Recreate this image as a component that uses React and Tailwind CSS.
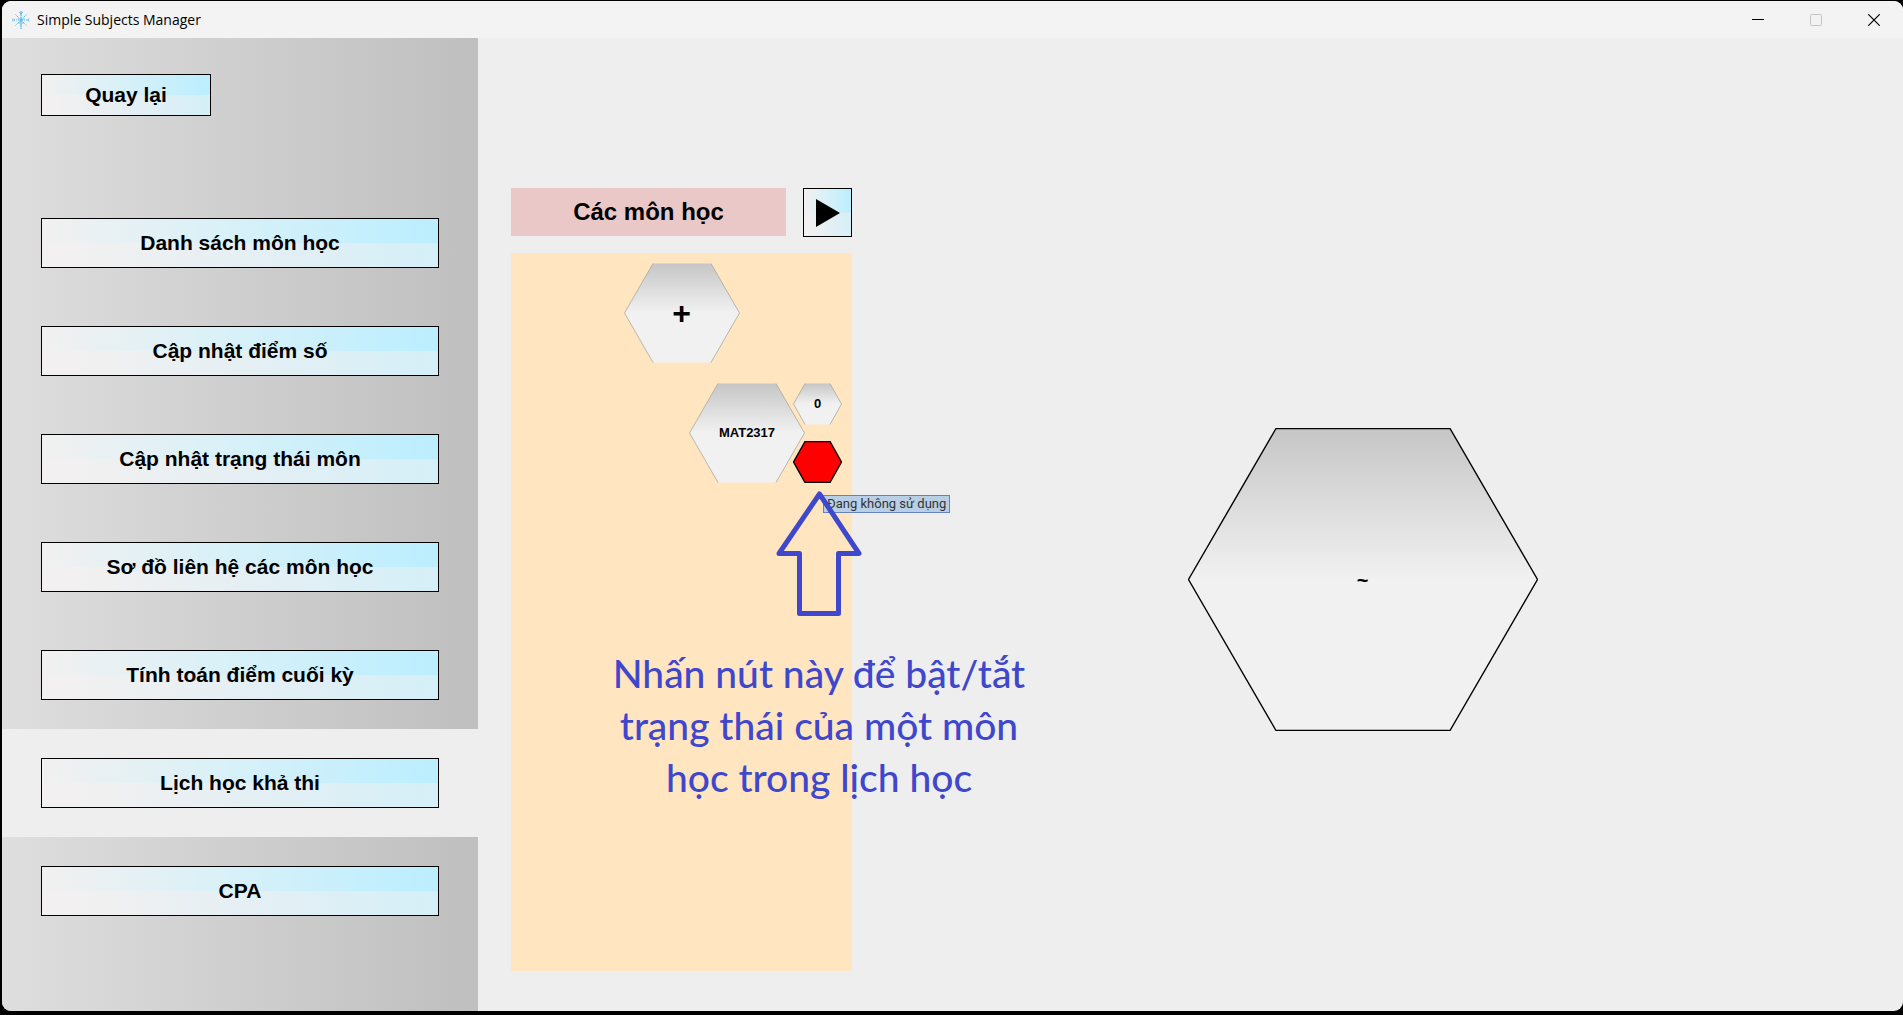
import React, { useId } from "react";

const NAV_ITEMS = [
  "Danh sách môn học",
  "Cập nhật điểm số",
  "Cập nhật trạng thái môn",
  "Sơ đồ liên hệ các môn học",
  "Tính toán điểm cuối kỳ",
  "Lịch học khả thi",
  "CPA",
];
const ACTIVE_ITEM = "Lịch học khả thi";

/* Two-tone glossy button: stronger blue on the upper half, paler below. */
function GlossButton({ className = "", children, ...rest }) {
  return (
    <button
      type="button"
      className={`grid place-items-center border border-black bg-[linear-gradient(to_right,#f2f0f0,#dcf1f7_40%,#bbeeff),linear-gradient(to_right,#f2f0f0_10%,#d5eff8)] bg-[length:100%_50%,100%_100%] bg-no-repeat font-bold text-black ${className}`}
      {...rest}
    >
      {children}
    </button>
  );
}

function Hexagon({ width, height, inset, fill, outline = "sides", label, className = "", children }) {
  const id = useId();
  const mid = height / 2;
  const left = `M${inset} 0.5 L0.5 ${mid} L${inset} ${height - 0.5}`;
  const right = `M${width - inset} 0.5 L${width - 0.5} ${mid} L${width - inset} ${height - 0.5}`;
  const body = `${left} L${width - inset} ${height - 0.5} L${width - 0.5} ${mid} L${width - inset} 0.5 Z`;
  return (
    <button type="button" aria-label={label} className={`grid shrink-0 place-items-center font-bold text-black ${className}`}>
      <svg width={width} height={height} viewBox={`0 0 ${width} ${height}`} className="col-start-1 row-start-1" aria-hidden="true">
        <defs>
          <linearGradient id={id} x1="0" y1="0" x2="0" y2="1">
            <stop offset="0" stopColor="#c6c6c6" />
            <stop offset="0.5" stopColor="#f1f1f1" />
          </linearGradient>
        </defs>
        <path d={body} fill={fill || `url(#${id})`} stroke={outline === "full" ? "#000" : "none"} strokeWidth="1.4" />
        {outline === "sides" && <path d={`${left} ${right}`} fill="none" stroke="#aaa79f" strokeWidth="0.8" />}
      </svg>
      <span className="col-start-1 row-start-1">{children}</span>
    </button>
  );
}

function StarIcon() {
  return (
    <svg width="18" height="18" viewBox="0 0 18 18" fill="none" stroke="#53b4e4" aria-hidden="true">
      <path d="M9 0v18" strokeWidth="1.2" strokeDasharray="5 0.6" />
      <path d="M0 9h18" strokeWidth="1" strokeDasharray="1 1" />
      <path d="M3.5 3.5l11 11M14.5 3.5l-11 11" strokeWidth="1" strokeDasharray="1.4 0.7" />
      <path d="M7 1l2 2 2-2M5.5 7L9 10.5 12.5 7M1 7.5L2.5 9 1 10.5M17 7.5L15.5 9 17 10.5M6.5 13L9 10.5 11.5 13" strokeWidth="0.8" />
    </svg>
  );
}

function TitleBar() {
  return (
    <header className="flex h-[37px] shrink-0 items-stretch bg-[#f3f3f3]">
      <div className="flex items-center gap-[7px] pl-[10px]">
        <StarIcon />
        <h1 className="font-['Open_Sans',sans-serif] text-[14px] leading-5 text-black">Simple Subjects Manager</h1>
      </div>
      <div className="ml-auto flex">
        <button type="button" aria-label="Minimize" className="grid w-[58px] place-items-center">
          <svg width="12" height="12" viewBox="0 0 12 12" stroke="#000"><path d="M0 5.5h12" /></svg>
        </button>
        <button type="button" aria-label="Maximize" disabled className="grid w-[58px] place-items-center">
          <svg width="12" height="12" viewBox="0 0 12 12" fill="none" stroke="#c3c3c3"><rect x="0.5" y="0.5" width="11" height="11" rx="1" /></svg>
        </button>
        <button type="button" aria-label="Close" className="grid w-[58px] place-items-center">
          <svg width="12" height="12" viewBox="0 0 12 12" stroke="#000" strokeWidth="1.2"><path d="M0.3 0.3l11.4 11.4M11.7 0.3L0.3 11.7" /></svg>
        </button>
      </div>
    </header>
  );
}

function Sidebar() {
  return (
    <aside className="w-[476px] shrink-0 bg-linear-to-r from-[#dedede] to-[#bfbfbf] pt-9">
      <div className="h-[115px] px-[39px]">
        <GlossButton className="h-[42px] w-[170px] text-[21px]">Quay lại</GlossButton>
      </div>
      <nav>
        {NAV_ITEMS.map((item) => (
          <div key={item} className={`px-[39px] py-[29px] ${item === ACTIVE_ITEM ? "bg-[#eeeeee]" : ""}`}>
            <GlossButton
              className="h-[50px] w-full text-[21px]"
              aria-current={item === ACTIVE_ITEM ? "page" : undefined}
            >
              {item}
            </GlossButton>
          </div>
        ))}
      </nav>
    </aside>
  );
}

function Annotation() {
  return (
    <div className="pointer-events-none absolute top-[49px] left-[26px] z-20 flex w-[440px] -translate-x-1/2 flex-col items-center text-[#3f48cc]">
      <svg width="86" height="126" viewBox="0 0 86 126" fill="none" stroke="currentColor" strokeWidth="5" strokeLinejoin="round" aria-hidden="true">
        <path d="M43.5 4L83 63.5H62.5V123.500H23.500V63.5H3Z" />
      </svg>
      <p className="mt-[31px] text-center font-['Lato',sans-serif] text-[39px] leading-[52px] font-medium whitespace-nowrap">
        Nhấn nút này để bật/tắt
        <br />
        trạng thái của một môn
        <br />
        học trong lịch học
      </p>
    </div>
  );
}

function SubjectPanel() {
  return (
    <section className="flex w-[341px] shrink-0 flex-col">
      <div className="flex items-start justify-between">
        <h2 className="grid h-12 w-[275px] place-items-center bg-[#ebc8c8] text-[24px] font-bold text-black">Các môn học</h2>
        <GlossButton className="h-[49px] w-[49px]" aria-label="Chạy">
          <svg width="24" height="28" viewBox="0 0 24 28" aria-hidden="true"><path d="M0 0L24 14L0 28Z" /></svg>
        </GlossButton>
      </div>
      <div className="mt-4 flex flex-1 flex-col bg-[#ffe6c1] pt-[10px]">
        <Hexagon width={116} height={100} inset={29} className="self-center text-[32px]">+</Hexagon>
        <div className="mt-5 flex justify-end pr-[10px]">
          <Hexagon width={116} height={100} inset={29} className="self-start text-[13px]">MAT2317</Hexagon>
          <div className="-ml-3 flex flex-col gap-4">
            <Hexagon width={49} height={42} inset={12} className="text-[13px]">0</Hexagon>
            <div className="relative">
              <Hexagon width={49} height={42} inset={12} fill="#ff0000" outline="full" label="Đang không sử dụng" />
              <div role="tooltip" className="absolute top-[54px] left-[30px] z-10 border border-[#6382bf] bg-[#b8cfe5] px-[3px] font-['Roboto',sans-serif] text-[13px] leading-4 whitespace-nowrap text-[#333333]">
                Đang không sử dụng
              </div>
              <Annotation />
            </div>
          </div>
        </div>
      </div>
    </section>
  );
}

export default function App() {
  return (
    <div className="flex min-h-screen flex-col bg-black pt-px pb-1 pl-[2px] font-['Liberation_Sans',Arial,sans-serif]">
      <div className="flex flex-1 flex-col overflow-hidden rounded-[9px] bg-[#eeeeee]">
        <TitleBar />
        <div className="flex flex-1">
          <Sidebar />
          <main className="flex flex-1 pt-[150px] pr-[30px] pb-10 pl-[33px]">
            <SubjectPanel />
            <section className="flex flex-1 items-center justify-center">
              <Hexagon width={350} height={303} inset={88} outline="full" className="text-[20px]">~</Hexagon>
            </section>
          </main>
        </div>
      </div>
    </div>
  );
}
